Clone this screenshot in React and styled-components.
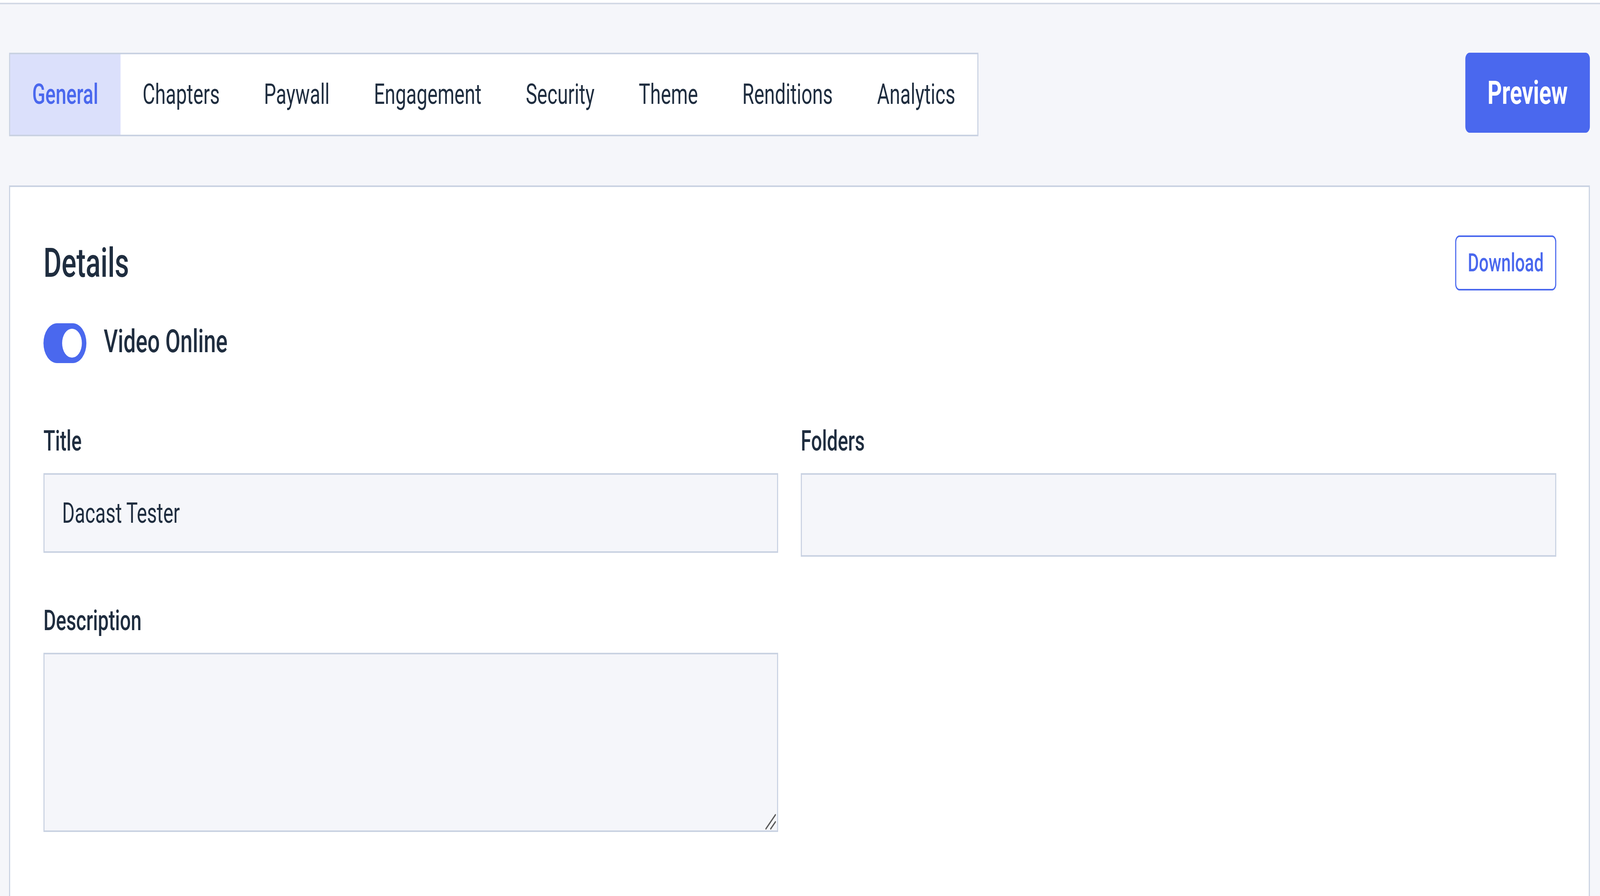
import React from "react";
import styled, { createGlobalStyle } from "styled-components";

const DESIGN_WIDTH = 6000;

const GlobalStyle = createGlobalStyle`
  html, body {
    margin: 0;
    padding: 0;
    overflow: hidden;
    background: #f5f6fa;
    font-family: Roboto, "Liberation Sans", Arial, sans-serif;
    color: #1f2d3f;
  }
  * { box-sizing: border-box; }
`;

const Stage = styled.div`
  width: ${DESIGN_WIDTH}px;
  transform-origin: 0 0;
`;

const TopStrip = styled.div`
  height: 11px;
  background: #ffffff;
  border-bottom: 4px solid #d3dae6;
`;

const Page = styled.div`
  padding: 124px 38px 0 34px;
`;

const Toolbar = styled.div`
  display: flex;
  justify-content: space-between;
  align-items: flex-start;
`;

const Tabs = styled.nav`
  display: flex;
  height: 214px;
  background: #ffffff;
  border: 4px solid #c9d2e2;
`;

const Tab = styled.div`
  display: flex;
  align-items: center;
  padding: 0 83px;
  font-size: 72px;
  line-height: 1;
  font-weight: ${(p) => (p.$active ? 500 : 400)};
  color: ${(p) => (p.$active ? "#4a68ee" : "#1f2d3f")};
  background: ${(p) => (p.$active ? "#dbe0fb" : "transparent")};
  white-space: nowrap;
`;

const PreviewButton = styled.button`
  width: 467px;
  height: 205px;
  border: none;
  border-radius: 16px;
  background: #4a68ee;
  color: #ffffff;
  font-family: inherit;
  font-size: 84px;
  font-weight: 700;
  line-height: 1;
`;

const Card = styled.section`
  margin-top: 126px;
  background: #ffffff;
  border: 4px solid #c9d2e2;
  padding: 124px 122px 220px 125px;
`;

const HeaderRow = styled.div`
  display: flex;
  justify-content: space-between;
  align-items: center;
  height: 141px;
`;

const Heading = styled.h2`
  margin: 0;
  font-size: 104px;
  line-height: 1;
  font-weight: 500;
  color: #1f2d3f;
`;

const OutlineButton = styled.button`
  width: 379px;
  height: 141px;
  border: 4px solid #4a68ee;
  border-radius: 16px;
  background: #ffffff;
  color: #4a68ee;
  font-family: inherit;
  font-size: 64px;
  font-weight: 500;
  line-height: 1;
`;

const ToggleRow = styled.div`
  margin-top: 84px;
  display: flex;
  align-items: center;
  gap: 65px;
  height: 102px;
`;

const Switch = styled.div`
  width: 161px;
  height: 102px;
  border-radius: 51px;
  background: #4a68ee;
  display: flex;
  align-items: center;
  justify-content: flex-end;
  padding: 0 17px;
`;

const Knob = styled.span`
  width: 74px;
  height: 74px;
  border-radius: 50%;
  background: #ffffff;
`;

const ToggleLabel = styled.span`
  font-size: 82px;
  font-weight: 500;
  line-height: 1;
  margin-bottom: 10px;
  color: #1f2d3f;
`;

const FieldsGrid = styled.div`
  margin-top: 164px;
  display: grid;
  grid-template-columns: 2755px 1fr;
  column-gap: 85px;
  row-gap: 128px;
  align-items: start;
`;

const Field = styled.div`
  display: flex;
  flex-direction: column;
  gap: 46px;
`;

const Label = styled.label`
  font-size: 72px;
  font-weight: 500;
  line-height: 1;
  color: #1f2d3f;
`;

const TextInput = styled.input`
  height: ${(p) => p.$h || 204}px;
  width: 100%;
  background: #f5f6fa;
  border: 4px solid #c9d2e2;
  border-radius: 0;
  padding: 0 66px;
  font-family: inherit;
  font-size: 72px;
  color: #1f2d3f;
  outline: none;
`;

const AreaWrap = styled.div`
  position: relative;
  height: 459px;
`;

const TextArea = styled.textarea`
  display: block;
  width: 100%;
  height: 100%;
  background: #f5f6fa;
  border: 4px solid #c9d2e2;
  border-radius: 0;
  padding: 40px 66px;
  font-family: inherit;
  font-size: 72px;
  color: #1f2d3f;
  resize: none;
  outline: none;
`;

const Grip = styled.svg`
  position: absolute;
  right: 8px;
  bottom: 6px;
  width: 40px;
  height: 40px;
`;

const tabs = [
  "General",
  "Chapters",
  "Paywall",
  "Engagement",
  "Security",
  "Theme",
  "Renditions",
  "Analytics",
];

function useStageScale() {
  const measure = () =>
    typeof document === "undefined"
      ? 1
      : Math.min(1, document.documentElement.clientWidth / DESIGN_WIDTH);
  const [scale, setScale] = React.useState(measure);
  React.useEffect(() => {
    const onResize = () => setScale(measure());
    window.addEventListener("resize", onResize);
    onResize();
    return () => window.removeEventListener("resize", onResize);
  }, []);
  return scale;
}

export default function App() {
  const scale = useStageScale();
  return (
    <>
      <GlobalStyle />
      <Stage style={{ transform: scale === 1 ? "none" : `scaleX(${scale})` }}>
        <TopStrip />
        <Page>
          <Toolbar>
            <Tabs>
              {tabs.map((t, i) => (
                <Tab key={t} $active={i === 0}>
                  {t}
                </Tab>
              ))}
            </Tabs>
            <PreviewButton>Preview</PreviewButton>
          </Toolbar>
          <Card>
            <HeaderRow>
              <Heading>Details</Heading>
              <OutlineButton>Download</OutlineButton>
            </HeaderRow>
            <ToggleRow>
              <Switch>
                <Knob />
              </Switch>
              <ToggleLabel>Video Online</ToggleLabel>
            </ToggleRow>
            <FieldsGrid>
              <Field>
                <Label>Title</Label>
                <TextInput defaultValue="Dacast Tester" />
              </Field>
              <Field>
                <Label>Folders</Label>
                <TextInput $h={214} readOnly />
              </Field>
              <Field>
                <Label>Description</Label>
                <AreaWrap>
                  <TextArea />
                  <Grip viewBox="0 0 40 40">
                    <line x1="2" y1="38" x2="38" y2="2" stroke="#5a5a5a" strokeWidth="4" strokeLinecap="round" />
                    <line x1="20" y1="38" x2="38" y2="20" stroke="#5a5a5a" strokeWidth="4" strokeLinecap="round" />
                  </Grip>
                </AreaWrap>
              </Field>
            </FieldsGrid>
          </Card>
        </Page>
      </Stage>
    </>
  );
}
